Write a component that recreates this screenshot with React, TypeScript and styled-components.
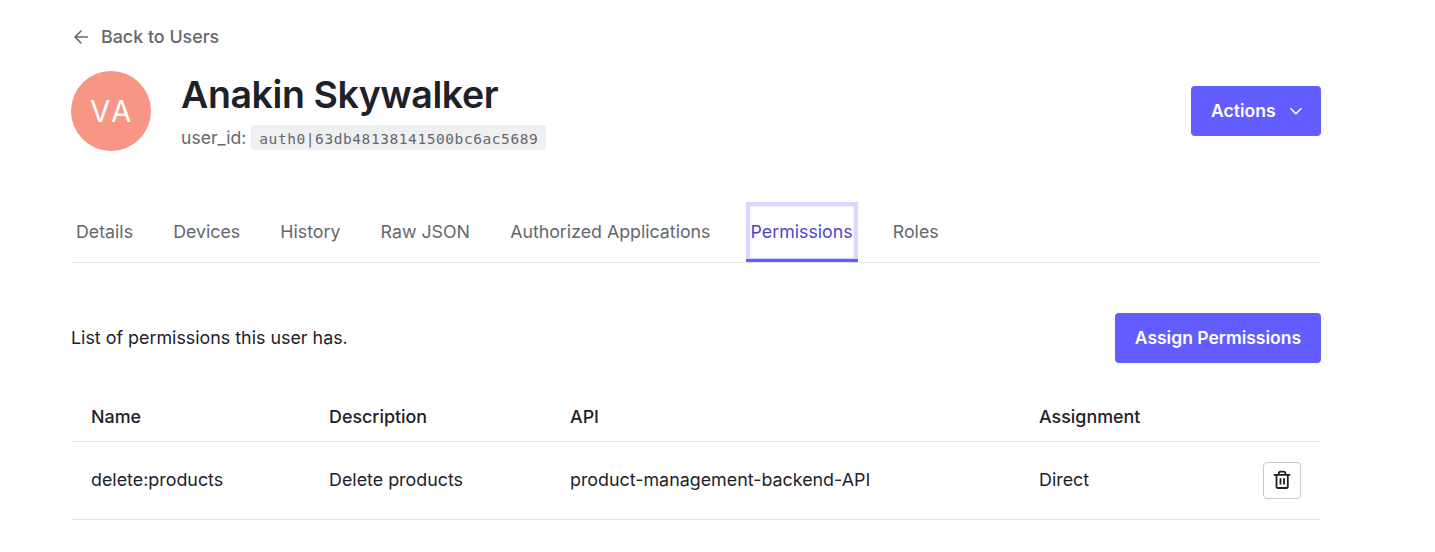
import React from "react";
import styled, { createGlobalStyle } from "styled-components";

const GlobalStyle = createGlobalStyle`
  * { box-sizing: border-box; }
  body {
    margin: 0;
    background: #fff;
    color: #1e212a;
    font-family: Inter, "Liberation Sans", sans-serif;
    font-size: 17.86px;
    line-height: 25px;
  }
  button { font: inherit; cursor: pointer; }
`;

const Page = styled.main`
  width: 1250px;
  margin-left: 71px;
  padding-top: 24px;
`;

const BackLink = styled.a`
  display: flex;
  align-items: center;
  height: 25px;
  gap: 10px;
  color: #65676e;
  font-weight: 500;
`;

const Header = styled.header`
  display: flex;
  align-items: center;
  height: 80px;
  margin-top: 22px;
`;

const Avatar = styled.div`
  display: flex;
  align-items: center;
  justify-content: center;
  width: 80px;
  height: 80px;
  border-radius: 50%;
  background: #f79685;
  color: #fff;
  font-size: 29.5px;
  font-weight: 400;
  font-kerning: none;
  letter-spacing: 0.6px;
`;

const Identity = styled.div`
  flex: 1;
  margin-left: 30px;
`;

const UserName = styled.h1`
  margin: 0;
  font-size: 37.5px;
  line-height: 46px;
  font-weight: 600;
  letter-spacing: -0.4px;
`;

const UserId = styled.div`
  display: flex;
  align-items: center;
  gap: 5px;
  height: 25px;
  margin: 7px 0 1px;
  line-height: 26px;
  font-size: 17.6px;
  color: #65676e;

  > span { height: 25px; }
`;

const Code = styled.code`
  height: 25px;
  padding: 2px 8px 0;
  border-radius: 4px;
  background: #eff0f2;
  font-family: "DejaVu Sans Mono", monospace;
  font-size: 14.5px;
  letter-spacing: 0.57px;
  line-height: 25px;
`;

const PrimaryButton = styled.button`
  display: flex;
  align-items: center;
  gap: 13.5px;
  height: 50px;
  padding: 0 20px 1px;
  border: 0;
  border-radius: 4px;
  background: #635dff;
  color: #fff;
  font-size: 17.5px;
  font-weight: 600;
  white-space: nowrap;
`;

const Tabs = styled.nav`
  display: flex;
  gap: 30.15px;
  height: 61px;
  margin-top: 51px;
  border-bottom: 1px solid #e3e4e6;
  font-size: 17.78px;
`;

const Tab = styled.a<{ $active?: boolean }>`
  height: 60px;
  padding: 0 5px;
  line-height: 59px;
  white-space: nowrap;
  color: ${(p) => (p.$active ? "#4f46cf" : "#65676e")};
  box-shadow: ${(p) =>
    p.$active ? "inset 0 -3px #635dff, inset 0 0 0 4px #d9d6ff, inset 0 0 0 5px #f3f2ff" : "none"};
`;

const Summary = styled.div`
  display: flex;
  align-items: center;
  justify-content: space-between;
  height: 50px;
  margin-top: 50px;

  > span { padding-bottom: 1px; }
`;

const Row = styled.div<{ $head?: boolean }>`
  display: grid;
  grid-template-columns: 238px 241px 469px 1fr auto;
  align-items: center;
  height: ${(p) => (p.$head ? 49 : 78)}px;
  padding: 0 20px;
  border-bottom: 1px solid #e3e4e6;
  font-weight: ${(p) => (p.$head ? 500 : 400)};

  > span { padding-bottom: 2px; }
`;

const Table = styled.section`
  margin-top: 30px;
`;

const DeleteButton = styled.button`
  display: flex;
  align-items: center;
  justify-content: center;
  width: 38px;
  height: 37px;
  padding: 0 0 1px;
  border: 1px solid #c9cace;
  border-radius: 4px;
  background: #fff;
  color: #1e212a;
`;

const ArrowIcon = () => (
  <svg width="20" height="20" viewBox="0 0 20 20" fill="none" stroke="currentColor" strokeWidth="1.6" strokeLinecap="round" strokeLinejoin="round">
    <path d="M16.5 10H4M10 4l-6 6 6 6" />
  </svg>
);

const ChevronIcon = () => (
  <svg width="12" height="16" viewBox="0 0 12 16" overflow="visible" fill="none" stroke="currentColor" strokeWidth="1.6" strokeLinecap="round" strokeLinejoin="round">
    <path d="M1.9 5.7 6.9 10.7 11.9 5.7" />
  </svg>
);

const TrashIcon = () => (
  <svg width="20" height="20" viewBox="0 0 20 20" fill="none" stroke="currentColor" strokeWidth="1.8" strokeLinejoin="round">
    <path d="M1.7 4.9h16.6M4.5 4.9v11.9a1.2 1.2 0 0 0 1.2 1.2h8.9a1.2 1.2 0 0 0 1.2-1.2V4.9M6.8 4.9V3.6a1.9 1.9 0 0 1 1.9-1.9h2.8a1.9 1.9 0 0 1 1.9 1.9v1.3M8.5 8.2v6.3M12 8.2v6.3" />
  </svg>
);

const tabs = ["Details", "Devices", "History", "Raw JSON", "Authorized Applications", "Permissions", "Roles"];

export default function App() {
  return (
    <>
      <GlobalStyle />
      <Page>
        <BackLink>
          <ArrowIcon />
          Back to Users
        </BackLink>
        <Header>
          <Avatar>VA</Avatar>
          <Identity>
            <UserName>Anakin Skywalker</UserName>
            <UserId>
              <span>user_id:</span>
              <Code>auth0|63db48138141500bc6ac5689</Code>
            </UserId>
          </Identity>
          <PrimaryButton>
            Actions
            <ChevronIcon />
          </PrimaryButton>
        </Header>
        <Tabs>
          {tabs.map((t) => (
            <Tab key={t} $active={t === "Permissions"}>
              {t}
            </Tab>
          ))}
        </Tabs>
        <Summary>
          <span>List of permissions this user has.</span>
          <PrimaryButton>Assign Permissions</PrimaryButton>
        </Summary>
        <Table>
          <Row $head>
            <span>Name</span>
            <span>Description</span>
            <span>API</span>
            <span>Assignment</span>
          </Row>
          <Row>
            <span>delete:products</span>
            <span>Delete products</span>
            <span>product-management-backend-API</span>
            <span>Direct</span>
            <DeleteButton aria-label="Delete">
              <TrashIcon />
            </DeleteButton>
          </Row>
        </Table>
      </Page>
    </>
  );
}
